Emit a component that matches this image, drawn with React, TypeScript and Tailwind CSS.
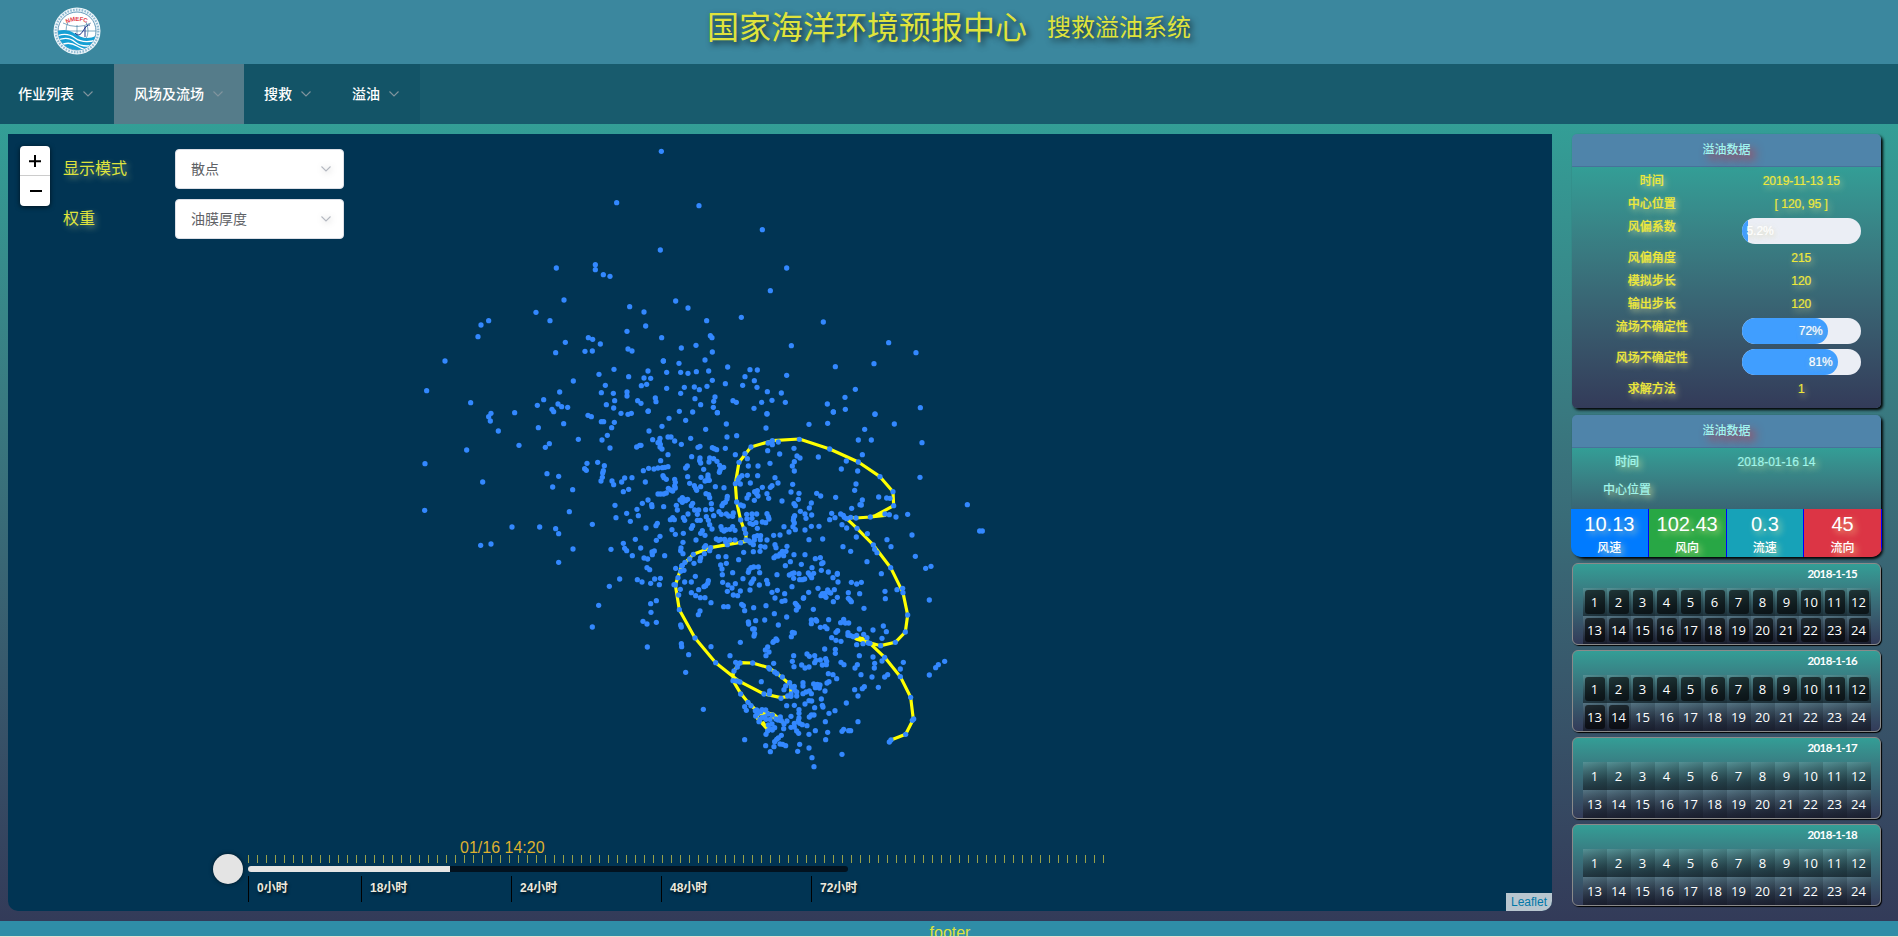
import React from "react";

type Pt = [number, number];
type Tile = { x: number; y: number; pts: Pt[] };

/* Particle positions, stored per tile in third-of-a-pixel units. */
const tiles: Tile[] = [
  {
    x: 400,
    y: 130,
    pts: [
      [784, 64], [650, 218], [781, 360], [469, 414], [586, 404], [586, 419], [610, 434], [630, 439], [492, 510], [408, 547],
      [450, 572], [266, 572], [243, 585], [234, 620], [135, 693], [80, 782], [689, 530], [732, 546], [737, 588], [681, 604],
      [785, 623], [565, 623], [578, 628], [601, 642], [496, 637], [467, 668], [555, 664], [577, 663], [684, 657], [696, 663],
      [642, 718], [597, 733], [686, 740], [744, 723], [732, 744], [752, 745], [724, 767], [740, 763], [616, 766], [520, 753],
      [790, 693],
    ],
  },
  {
    x: 660,
    y: 130,
    pts: [
      [117, 227], [307, 299], [380, 414], [331, 482], [47, 513], [84, 534], [140, 572], [244, 562], [490, 576], [394, 647],
      [686, 638], [768, 668], [642, 701], [526, 710], [380, 736], [151, 617], [156, 623], [108, 646], [64, 654], [157, 666],
      [135, 690], [57, 700], [10, 693], [20, 727], [62, 727], [84, 730], [109, 725], [146, 723], [203, 711], [270, 719],
      [292, 720], [255, 740], [283, 752], [157, 751], [196, 761], [248, 766], [291, 772], [141, 769], [103, 771], [73, 772],
      [118, 779], [20, 775], [62, 790], [105, 806], [165, 801], [161, 814], [122, 824], [160, 832], [172, 848], [219, 812],
      [229, 817], [282, 835], [305, 817], [336, 811], [322, 785], [364, 789], [376, 817], [321, 851], [586, 778], [555, 802],
      [502, 822], [520, 846], [556, 838], [645, 853], [781, 833],
    ],
  },
  {
    x: 400,
    y: 380,
    pts: [
      [212, 68], [273, 100], [266, 110], [271, 123], [295, 153], [344, 98], [200, 210], [75, 251], [248, 306], [74, 391],
      [357, 196], [412, 76], [431, 59], [479, 36], [474, 72], [485, 80], [503, 82], [456, 88], [461, 95], [491, 131],
      [415, 143], [448, 191], [436, 202], [535, 178], [441, 281], [476, 289], [458, 321], [518, 329], [508, 395], [336, 441],
      [419, 441], [467, 446], [476, 461], [519, 507], [577, 433], [242, 496], [273, 492], [476, 547], [604, 38], [640, 40],
      [681, 36], [681, 48], [644, 62], [619, 74], [641, 84], [713, 62], [723, 70], [663, 100], [684, 103], [694, 100],
      [564, 106], [574, 110], [604, 125], [611, 125], [643, 127], [635, 143], [622, 166], [606, 180], [630, 204], [710, 201],
      [719, 196], [561, 250], [593, 247], [613, 257], [554, 266], [559, 271], [610, 272], [608, 279], [607, 292], [603, 303],
      [636, 303], [641, 314], [674, 294], [665, 306], [696, 293], [686, 328], [670, 335], [645, 376], [648, 413], [680, 400],
      [711, 388], [715, 407], [691, 424], [706, 478], [670, 490], [674, 505], [680, 512], [697, 527], [633, 508], [659, 597],
      [628, 619], [596, 676], [577, 741], [712, 599], [766, 54], [768, 65], [745, 93],
    ],
  },
  {
    x: 640,
    y: 410,
    pts: [
      [24, 4], [118, 4], [158, 6], [232, 8], [87, 25], [137, 31], [66, 49], [27, 63], [197, 58], [259, 42],
      [381, 12], [378, 54], [507, 43], [563, 40], [580, 6], [705, 12], [763, 42], [674, 58], [655, 90], [694, 90],
      [846, 98], [840, 202], [667, 134], [982, 284], [1019, 363], [1027, 363], [803, 313], [768, 321], [816, 375], [826, 439],
      [857, 475], [873, 469], [868, 570], [868, 795], [887, 773], [895, 764], [914, 754], [715, 832], [38, 89], [60, 85],
      [58, 94], [54, 98], [61, 103], [60, 111], [66, 117], [84, 81], [93, 81], [104, 93], [124, 103], [152, 85],
      [3, 106], [84, 134], [62, 152], [84, 170], [75, 172], [67, 173], [54, 174], [42, 177], [26, 175], [10, 182],
      [180, 109], [174, 112], [217, 113], [223, 116], [230, 119], [256, 115], [261, 81], [290, 77], [155, 140], [180, 144],
      [179, 152], [182, 159], [207, 156], [209, 144], [221, 146], [231, 154], [142, 168], [137, 174], [191, 178], [239, 166],
      [243, 174], [251, 172], [240, 181], [238, 187], [286, 134], [315, 131], [322, 146], [325, 168], [354, 168], [390, 160],
      [383, 122], [419, 132], [384, 99], [393, 97], [397, 104], [415, 96], [462, 115], [471, 138], [480, 144], [463, 155],
      [457, 168], [463, 183], [535, 141], [619, 153], [604, 177], [653, 183], [648, 222], [644, 241], [716, 261], [740, 264],
      [750, 265], [667, 270], [660, 284], [664, 285], [635, 295], [16, 216], [69, 197], [72, 203], [79, 208], [104, 208],
      [106, 217], [104, 228], [106, 234], [85, 235], [92, 240], [98, 243], [79, 249], [71, 252], [62, 252], [54, 252],
      [24, 270], [7, 280], [35, 284], [36, 290], [71, 290], [120, 270], [127, 263], [132, 268], [127, 277], [137, 272],
      [143, 268], [109, 286], [112, 300], [143, 200], [149, 220], [163, 227], [167, 235], [170, 241], [182, 230], [183, 202],
      [204, 195], [204, 202], [202, 211], [195, 213], [208, 211], [226, 230], [252, 233], [198, 251], [206, 254], [209, 263],
      [158, 280], [154, 287], [164, 300], [176, 300], [197, 299], [215, 298], [214, 281], [246, 287], [250, 280], [256, 277],
      [261, 267], [262, 259], [237, 305], [172, 313], [199, 320], [221, 317], [244, 313], [259, 312], [266, 318], [280, 309],
      [278, 319], [98, 323], [91, 329], [103, 329], [52, 340], [48, 347], [18, 354], [60, 379], [49, 391], [96, 359],
      [106, 373], [130, 370], [130, 323], [134, 331], [144, 312], [158, 347], [154, 355], [172, 331], [181, 331], [205, 331],
      [209, 344], [216, 357], [187, 362], [182, 370], [195, 376], [129, 397], [123, 414], [122, 422], [129, 431], [168, 390],
      [243, 350], [246, 359], [252, 363], [258, 359], [270, 358], [278, 350], [285, 361], [229, 387], [236, 391], [242, 388],
      [254, 388], [257, 395], [270, 390], [285, 390], [302, 398], [306, 197], [298, 203], [294, 210], [322, 196], [331, 219],
      [353, 197], [301, 222], [367, 232], [352, 242], [344, 245], [326, 254], [321, 264], [350, 251], [354, 258], [343, 271],
      [391, 232], [396, 227], [405, 203], [414, 219], [381, 251], [386, 265], [426, 273], [458, 223], [453, 246], [477, 250],
      [475, 268], [462, 281], [466, 287], [514, 279], [530, 250], [542, 258], [587, 262], [508, 294], [310, 288], [302, 285],
      [320, 313], [336, 312], [321, 326], [336, 325], [350, 312], [381, 311], [385, 320], [387, 327], [377, 338], [367, 336],
      [348, 338], [330, 340], [338, 343], [352, 355], [313, 357], [317, 370], [432, 350], [461, 323], [464, 317], [460, 331],
      [463, 339], [459, 350], [466, 359], [481, 304], [495, 312], [498, 325], [515, 315], [514, 349], [537, 349], [495, 360],
      [575, 310], [585, 323], [569, 329], [602, 312], [610, 316], [606, 344], [620, 354], [649, 381], [682, 371], [741, 389],
      [753, 410], [609, 410], [632, 424], [681, 455], [724, 491], [343, 380], [352, 377], [361, 389], [343, 390], [327, 393],
      [332, 398], [340, 404], [362, 377], [381, 390], [401, 376], [420, 375], [447, 366], [362, 409], [375, 411], [340, 425],
      [360, 424], [311, 427], [405, 404], [408, 413], [441, 409], [438, 424], [427, 424], [420, 432], [415, 438], [408, 438],
      [402, 443], [431, 437], [462, 434], [495, 434], [507, 389], [548, 387], [541, 443], [526, 446], [451, 455], [436, 467],
      [484, 463], [516, 473], [549, 458], [545, 461], [544, 481], [565, 486], [2, 414], [43, 423], [36, 426], [37, 434],
      [12, 444], [23, 447], [74, 437], [21, 473], [29, 479], [6, 516], [32, 520], [44, 507], [61, 505], [58, 524],
      [49, 572], [32, 581], [33, 607], [9, 634], [21, 642], [49, 637], [22, 711], [197, 407], [193, 412], [209, 422],
      [193, 431], [182, 443], [180, 452], [149, 447], [162, 460], [135, 457], [127, 466], [107, 475], [132, 481], [122, 484],
      [114, 503], [134, 516], [121, 538], [116, 555], [154, 516], [166, 499], [154, 548], [167, 557], [176, 539], [181, 563],
      [195, 563], [205, 512], [203, 520], [197, 527], [192, 530], [213, 578], [235, 440], [258, 440], [296, 449], [259, 460],
      [242, 465], [246, 477], [247, 494], [248, 517], [264, 525], [278, 488], [286, 521], [276, 534], [262, 544], [280, 555],
      [293, 557], [301, 543], [309, 506], [327, 480], [333, 473], [341, 471], [355, 471], [325, 487], [341, 507], [336, 515],
      [333, 520], [330, 540], [358, 525], [359, 488], [380, 511], [383, 521], [411, 494], [412, 541], [396, 547], [434, 551],
      [405, 564], [426, 574], [435, 572], [251, 590], [264, 590], [305, 583], [310, 587], [314, 602], [341, 593], [378, 587],
      [403, 611], [440, 621], [415, 645], [374, 630], [347, 632], [325, 636], [326, 642], [338, 657], [343, 657], [344, 671],
      [342, 678], [301, 697], [180, 603], [175, 614], [122, 645], [124, 651], [124, 701], [125, 710], [213, 710], [146, 734],
      [137, 787], [190, 898], [270, 737], [448, 495], [456, 491], [461, 505], [456, 530], [462, 489], [479, 509], [487, 509],
      [494, 507], [477, 491], [505, 489], [510, 496], [521, 490], [515, 503], [592, 490], [579, 503], [592, 493], [594, 516],
      [534, 535], [506, 547], [490, 565], [491, 563], [563, 540], [567, 547], [583, 539], [547, 551], [555, 550], [553, 557],
      [558, 562], [572, 549], [592, 562], [580, 575], [543, 557], [625, 548], [625, 565], [630, 570], [634, 575], [659, 551],
      [634, 517], [650, 522], [664, 517], [672, 595], [735, 544], [736, 566], [771, 539], [788, 535], [466, 580], [470, 585],
      [475, 591], [469, 600], [520, 598], [514, 630], [527, 629], [530, 633], [514, 641], [566, 629], [611, 628], [602, 638],
      [616, 639], [626, 639], [541, 652], [555, 650], [561, 656], [593, 662], [588, 667], [575, 683], [603, 694], [588, 691],
      [624, 668], [624, 676], [658, 657], [730, 648], [739, 665], [699, 660], [726, 685], [671, 673], [681, 683], [669, 701],
      [650, 704], [685, 699], [457, 667], [463, 669], [454, 680], [408, 687], [411, 691], [401, 694], [399, 697], [383, 711],
      [376, 720], [387, 726], [378, 737], [401, 760], [554, 717], [586, 718], [586, 730], [501, 732], [508, 739], [524, 737],
      [461, 737], [457, 754], [462, 770], [485, 765], [495, 774], [507, 771], [528, 751], [541, 750], [557, 746], [560, 754],
      [547, 765], [559, 764], [524, 758], [565, 791], [579, 794], [590, 806], [603, 757], [612, 764], [658, 737], [699, 741],
      [726, 753], [790, 757], [781, 777], [704, 760], [703, 774], [696, 801], [734, 801], [743, 794], [663, 794], [645, 774],
      [652, 764], [673, 830], [667, 836], [644, 839], [654, 858], [619, 879], [521, 822], [532, 823], [540, 825], [526, 833],
      [538, 834], [561, 819], [567, 815], [489, 818], [489, 828], [463, 829], [463, 840], [470, 846], [470, 858], [489, 851],
      [498, 846], [508, 843], [514, 851], [555, 843], [544, 867], [515, 873], [507, 872], [495, 882], [547, 886], [549, 891],
      [524, 893], [585, 902], [567, 910], [522, 915], [514, 915], [508, 921], [477, 899], [463, 886], [440, 887], [477, 910],
      [477, 924], [453, 919], [475, 932], [479, 940], [463, 940], [487, 944], [501, 947], [453, 952], [463, 951], [470, 963],
      [476, 970], [507, 973], [526, 962], [563, 967], [556, 935], [557, 989], [606, 964], [611, 958], [626, 962], [632, 962],
      [654, 935], [606, 1033], [516, 1043], [522, 1070], [507, 1014], [479, 1003], [473, 1024], [377, 1007], [402, 1010], [391, 1025],
      [314, 989], [420, 1002], [428, 1003], [437, 1007], [404, 995], [410, 988], [415, 984], [424, 976], [378, 973], [383, 963],
      [390, 957], [397, 960], [404, 953], [408, 927], [397, 915], [384, 912], [377, 900], [390, 928], [378, 928], [374, 921],
      [367, 922], [360, 928], [357, 935], [347, 918], [352, 911], [350, 900], [362, 905], [421, 921], [424, 932], [441, 933],
      [432, 942], [431, 956], [414, 930], [396, 942], [385, 945], [366, 899], [346, 902], [333, 887], [314, 890], [319, 901],
      [324, 877], [302, 852], [279, 812], [290, 813], [282, 783], [292, 771], [287, 757], [300, 759], [338, 759], [386, 773],
      [389, 777], [404, 786], [411, 791], [427, 801], [364, 815], [437, 828], [449, 818], [454, 831], [453, 852], [432, 839],
      [389, 843], [388, 852], [372, 852], [423, 865], [453, 859], [443, 858], [300, 816], [227, 758], [165, 684], [118, 599],
      [106, 525], [102, 524], [125, 468], [160, 433], [212, 413], [262, 404], [318, 390], [302, 330], [290, 276], [286, 221],
      [297, 157], [333, 111], [397, 92], [478, 88], [569, 117], [655, 156], [720, 200], [759, 245], [761, 287], [735, 312],
      [748, 314], [691, 321], [648, 324], [632, 322], [620, 326], [613, 322], [651, 355], [700, 405], [704, 418], [711, 428],
      [752, 473], [789, 548], [803, 615], [796, 666], [766, 697], [722, 707], [690, 700], [640, 680], [734, 742], [781, 800],
      [812, 862], [821, 927], [817, 931], [797, 973], [753, 990], [748, 996], [650, 676], [632, 677],
    ],
  },
];

const track =
  "753,990 797,973 820,928 812,862 781,800 734,742 690,700 668,686 640,680 650,688 722,707 766,697 796,666 803,615 789,548 752,473 700,405 651,355 620,326 632,322 648,324 691,321 735,312 700,318 735,316 700,320 761,287 759,245 720,200 655,156 569,117 478,87 397,92 333,111 297,157 286,221 290,276 302,330 312,358 318,370 318,394 262,404 212,413 160,433 125,468 106,525 118,599 165,684 227,758 280,800 300,815 372,852 423,863 453,858 452,825 412,791 386,773 338,759 300,758 280,785 279,812 302,850 325,878 360,912 384,908 400,922 430,938 400,912 355,905 352,925 380,955 368,935";

function Chevron({ className = "" }: { className?: string }) {
  return (
    <svg viewBox="0 0 12 12" className={"h-3 w-3 " + className} fill="none" stroke="currentColor" strokeWidth="1.1">
      <path d="M1.5 3.5 L6 8 L10.5 3.5" />
    </svg>
  );
}

function Logo() {
  return (
    <svg viewBox="0 0 48 48" className="h-12 w-12">
      <defs>
        <clipPath id="globe">
          <circle cx="24" cy="24" r="19" />
        </clipPath>
        <path id="arc" d="M13.5 16.5 Q24 11.5 35 16.5" />
      </defs>
      <circle cx="24" cy="24" r="23.5" fill="#eef6fa" />
      <circle cx="24" cy="24" r="21.3" fill="none" stroke="#8fb9d1" strokeWidth="2.2" strokeDasharray="1.6 1.3" />
      <circle cx="24" cy="24" r="19" fill="#fff" stroke="#3c7fa8" strokeWidth="0.8" />
      <g clipPath="url(#globe)">
        <g fill="none" stroke="#4a87a8" strokeWidth="0.7">
          <path d="M24 18V30M5 24H43M10 16Q24 23 38 16M15 15Q11 24 15 32M33 15Q37 24 33 32" />
        </g>
        <path d="M4 24Q14 21 21 26T34 31T45 28V46H4Z" fill="#17a0d4" />
        <g fill="none" stroke="#fff" strokeWidth="1.3">
          <path d="M4 29Q14 25 22 31T44 33" />
          <path d="M5 33Q15 29 22 35T42 38" />
          <path d="M8 38Q16 34 24 39T38 42" />
        </g>
        <path d="M22 26Q26 31 30 24T37 18M32 19V30" fill="none" stroke="#223a8c" strokeWidth="1" />
      </g>
      <text fill="#e2404a" fontSize="6" fontWeight="700" fontFamily="Liberation Sans, sans-serif">
        <textPath href="#arc" textLength="21">NMEFC</textPath>
      </text>
    </svg>
  );
}

function NavItem({ label, className }: { label: string; className: string }) {
  return (
    <div className={"flex items-center gap-2 text-sm font-medium text-white " + className}>
      <span>{label}</span>
      <Chevron className="text-[#82959e]" />
    </div>
  );
}

function SelectRow({ label, value }: { label: string; value: string }) {
  return (
    <div className="flex h-10 items-center">
      <span className="w-28 text-base text-[#dfe33c] [text-shadow:3px_3px_6px_rgba(255,250,160,0.4)]">{label}</span>
      <div className="flex h-10 w-[169px] items-center justify-between rounded border border-[#dcdfe6] bg-white pr-[11px] pl-[15px] text-sm text-[#606266]">
        <span>{value}</span>
        <Chevron className="text-[#b4b8c0] drop-shadow-[1px_1px_3px_rgba(0,0,0,0.25)]" />
      </div>
    </div>
  );
}

function Progress({ text, bar }: { text: string; bar: string }) {
  return (
    <div className="mt-0.5 flex h-[26px] w-[119px] overflow-hidden rounded-full bg-[#ebeef5]">
      <div className={"flex h-full items-center justify-end bg-[#409eff] text-white " + bar}>
        <span className="whitespace-nowrap [text-shadow:1px_2px_5px_rgba(205,200,120,0.55)]">{text}</span>
      </div>
    </div>
  );
}

function CardTitle() {
  return (
    <div className="flex h-[33px] items-center justify-center border-b border-[#47729a] bg-[#4f84aa] text-[#a0f5f0]">
      <span className="[text-shadow:5px_5px_10px_rgba(200,50,60,0.9)]">溢油数据</span>
    </div>
  );
}

const info: { label: string; value?: string; bar?: string }[] = [
  { label: "时间", value: "2019-11-13 15" },
  { label: "中心位置", value: "[ 120, 95 ]" },
  { label: "风偏系数", value: "5.2%", bar: "w-[6px] pr-0 [&>span]:-mr-[26px]" },
  { label: "风偏角度", value: "215" },
  { label: "模拟步长", value: "120" },
  { label: "输出步长", value: "120" },
  { label: "流场不确定性", value: "72%", bar: "w-[86px] rounded-r-full pr-[5px]" },
  { label: "风场不确定性", value: "81%", bar: "w-[96px] rounded-r-full pr-[5px]" },
  { label: "求解方法", value: "1" },
];

const stats = [
  { value: "10.13", label: "风速", bg: "bg-[#007bff]" },
  { value: "102.43", label: "风向", bg: "bg-[#28a745]" },
  { value: "0.3", label: "流速", bg: "bg-[#17a2b8]" },
  { value: "45", label: "流向", bg: "bg-[#dc3545]" },
];

const days = [
  { date: "2018-1-15", done: 24 },
  { date: "2018-1-16", done: 14 },
  { date: "2018-1-17", done: 0 },
  { date: "2018-1-18", done: 0 },
];

const marks = [
  { label: "0小时", width: "w-[113px]" },
  { label: "18小时", width: "w-[150px]" },
  { label: "24小时", width: "w-[150px]" },
  { label: "48小时", width: "w-[150px]" },
  { label: "72小时", width: "w-[150px]" },
];

function DayCard({ date, done }: { date: string; done: number }) {
  return (
    <div className="h-[82px] rounded-md border border-[#8a8a8a] bg-linear-to-b from-[#339e96] to-[#333b59] pr-[9px] pl-[10px] shadow-[1px_1px_1px_0px_#000]">
      <div className="flex h-6 items-center justify-end pr-[14px] pb-1 font-['Lato'] text-[11.5px] font-bold tracking-[-0.65px] text-white">
        {date}
      </div>
      <div className="grid w-72 grid-cols-12 font-['Open_Sans'] text-[13px] leading-6 font-medium text-white">
        {Array.from({ length: 24 }, (_, i) => (
          <div key={i} className="h-7 bg-linear-165 from-white/15 to-black/50 p-0.5">
            <div className={"h-6 rounded-[3px] pr-px text-center " + (i < done ? "bg-black/60" : "")}>{i + 1}</div>
          </div>
        ))}
      </div>
    </div>
  );
}

export default function App() {
  return (
    <div className="flex h-[937px] w-[1898px] flex-col overflow-hidden bg-[#e9dfcf] font-['Liberation_Sans','Noto_Sans_CJK_SC',sans-serif]">
      <header className="flex h-16 shrink-0 bg-[#3b879e]">
        <div className="w-[707px] pt-[7px] pl-[53px]">
          <Logo />
        </div>
        <h1 className="flex h-[55px] items-center gap-5 text-[#dfe33c] [text-shadow:3px_3px_6px_rgba(0,0,0,0.7)]">
          <span className="text-[32px]">国家海洋环境预报中心</span>
          <span className="text-2xl">搜救溢油系统</span>
        </h1>
      </header>

      <nav className="flex h-[60px] shrink-0 bg-[#185b6d]">
        <NavItem label="作业列表" className="w-[114px] bg-[#135467] pl-[18px]" />
        <NavItem label="风场及流场" className="w-[130px] bg-[#557c8a] pl-5" />
        <NavItem label="搜救" className="w-[88px] bg-[#135467] pl-5" />
        <NavItem label="溢油" className="w-[88px] bg-[#135467] pl-5" />
      </nav>

      <main className="flex h-[797px] shrink-0 bg-linear-to-b from-[#339e96] to-[#333b59] pt-2.5 pl-2">
        <section className="relative flex h-[777px] w-[1544px] flex-col overflow-hidden rounded-b-[10px] bg-[#013453]">
          <svg viewBox="8 134 1544 777" className="absolute inset-0 h-[777px] w-[1544px]">
            <g transform="translate(640 410) scale(0.33333)">
              <polyline points={track} fill="none" stroke="#ffff00" strokeWidth="9.5" strokeLinejoin="round" />
            </g>
            {tiles.map((t, i) => (
              <g key={i} transform={`translate(${t.x} ${t.y}) scale(0.33333)`} fill="#3388ff">
                {t.pts.map(([x, y], j) => (
                  <circle key={j} cx={x} cy={y} r="7.9" />
                ))}
              </g>
            ))}
          </svg>

          <div className="relative flex h-[686px] gap-[13px] pl-3">
            <div className="mt-3 flex h-[60px] w-[30px] flex-col rounded-sm bg-white text-black shadow-[0_1px_5px_rgba(0,0,0,0.65)]">
              <svg viewBox="0 0 30 60" className="h-[60px] w-[30px]" stroke="#000" strokeWidth="2">
                <path d="M9 15.2H21M15 9V21M10 45H22" />
                <path d="M0 29.5H30" stroke="#ccc" strokeWidth="1" />
              </svg>
            </div>
            <div className="mt-[15px] flex flex-col gap-2.5">
              <SelectRow label="显示模式" value="散点" />
              <SelectRow label="权重" value="油膜厚度" />
            </div>
          </div>

          <div className="relative flex h-[91px] pl-[205px]">
            <div className="mt-[34px] mr-[5px] h-[30px] w-[30px] rounded-full bg-[#e4e4e4] shadow-[0_0_4px_rgba(0,0,0,0.6)]" />
            <div className="w-[863px] pt-[18px]">
              <div className="h-[17px] pl-[212px] text-base leading-[19px] text-[#ddb02f]">01/16 14:20</div>
              <div className="flex h-2 gap-2">
                {Array.from({ length: 96 }, (_, i) => (
                  <div key={i} className="h-2 w-px shrink-0 bg-[#97a04a]" />
                ))}
              </div>
              <div className="mt-[3px] h-1.5 w-[600px] overflow-hidden rounded-[3px] bg-[#02121f]">
                <div className="h-1.5 w-[202px] bg-[#e5e5e5]" />
              </div>
              <div className="mt-1 flex">
                {marks.map((m) => (
                  <div
                    key={m.label}
                    className={
                      "h-[26px] shrink-0 border-l border-black pl-2 text-xs leading-6 font-bold text-[#ece9dd] [text-shadow:1px_2px_3px_rgba(0,0,0,0.7)] " +
                      m.width
                    }
                  >
                    {m.label}
                  </div>
                ))}
              </div>
            </div>
          </div>

          <div className="absolute right-0 bottom-0 h-[18px] w-[46px] bg-[#b8c6cf] text-center text-xs leading-[18px] text-[#0078a8]">
            Leaflet
          </div>
        </section>

        <aside className="ml-5 w-[309px] text-xs font-medium">
          <div className="h-[274px] overflow-hidden rounded-[5px] shadow-[2px_2px_3px_0px_#000]">
            <CardTitle />
            <div className="h-[241px] bg-linear-to-b from-[#339e96] to-[#333b59] px-[5px] pt-[3px] text-[#eee83a] [-webkit-text-stroke:0.2px_currentColor] [text-shadow:2px_3px_6px_rgba(255,250,160,0.6)]">
              {info.map((r) => (
                <div key={r.label} className={"grid grid-cols-2 leading-[23px] " + (r.bar ? "h-[31px]" : "h-[23px]")}>
                  <div className="text-center">{r.label}</div>
                  <div className="flex justify-center">
                    {r.bar ? <Progress text={r.value ?? ""} bar={r.bar} /> : r.value}
                  </div>
                </div>
              ))}
            </div>
          </div>

          <div className="mt-[7px] h-[142px] rounded-[5px] rounded-b-[10px] shadow-[2px_2px_3px_0px_#000]">
            <div className="overflow-hidden rounded-t-[5px]">
              <CardTitle />
            </div>
            <div className="h-[109px] rounded-b-[10px] bg-linear-to-b from-[#339e96] to-[#333b59] text-[#a0f5ea] [text-shadow:3px_3px_6px_rgba(255,250,160,0.6)]">
              <div className="flex h-7 items-center [-webkit-text-stroke:0.2px_currentColor]">
                <span className="w-[110px] text-center">时间</span>
                <span className="w-[189px] text-center">2018-01-16 14</span>
              </div>
              <div className="flex h-[33px] items-center pb-[5px]">
                <span className="w-[110px] text-center">中心位置</span>
              </div>
              <div className="-mx-px grid h-12 grid-cols-4 overflow-hidden rounded-b-[10px] text-white">
                {stats.map((s) => (
                  <div key={s.label} className={"border-r border-[#0000ff] text-center " + s.bg}>
                    <div className="h-[29px] text-xl leading-[31px] font-normal">{s.value}</div>
                    <div className="leading-5">{s.label}</div>
                  </div>
                ))}
              </div>
            </div>
          </div>

          <div className="mt-1.5 flex flex-col gap-[5px]">
            {days.map((d) => (
              <DayCard key={d.date} date={d.date} done={d.done} />
            ))}
          </div>
        </aside>
      </main>

      <footer className="h-[15px] shrink-0 overflow-hidden bg-[#2f8da7] pl-0.5 text-center text-base leading-6 text-[#dfe33c]">
        footer
      </footer>
    </div>
  );
}
